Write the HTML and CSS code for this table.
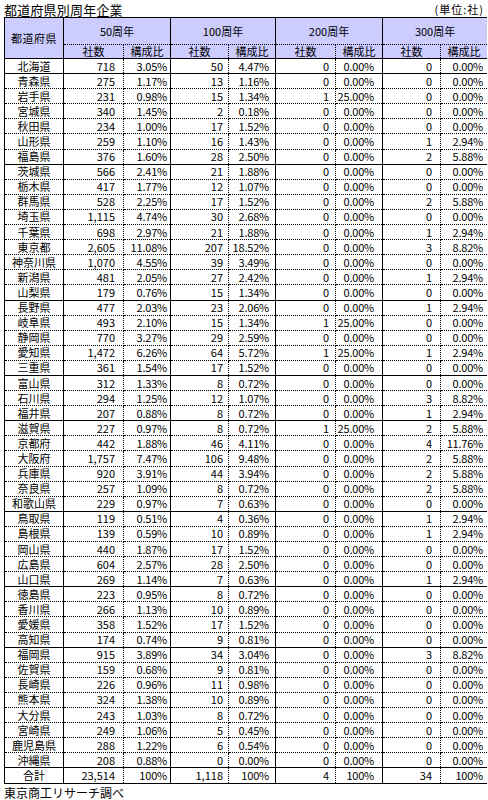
FILE: index.html
```html
<!DOCTYPE html>
<html lang="ja">
<head>
<meta charset="utf-8">
<title>都道府県別周年企業</title>
<link rel="stylesheet" href="styles.css">
</head>
<body>
<div class="head">
  <div class="title">都道府県別周年企業</div>
  <div class="unit">(単位:社)</div>
</div>
<table class="tbl">
  <colgroup>
    <col class="w-pref"><col class="w-n1"><col class="w-p"><col class="w-n2"><col class="w-p"><col class="w-n1"><col class="w-p"><col class="w-n2"><col class="w-p">
  </colgroup>
  <thead>
    <tr class="hr1">
      <th rowspan="2" class="pref">都道府県</th>
      <th colspan="2" class="grp">50周年</th>
      <th colspan="2" class="grp">100周年</th>
      <th colspan="2" class="grp">200周年</th>
      <th colspan="2" class="grp">300周年</th>
    </tr>
    <tr class="hr2">
      <th class="n">社数</th><th class="p">構成比</th>
      <th class="n">社数</th><th class="p">構成比</th>
      <th class="n">社数</th><th class="p">構成比</th>
      <th class="n">社数</th><th class="p">構成比</th>
    </tr>
  </thead>
  <tbody>
    <tr class="rs"><td class="pref">北海道</td><td class="n c1">718</td><td class="p p1">3.05%</td><td class="n c2">50</td><td class="p p2">4.47%</td><td class="n c3">0</td><td class="p p3">0.00%</td><td class="n c4">0</td><td class="p p4">0.00%</td></tr>
    <tr class="rs"><td class="pref">青森県</td><td class="n c1">275</td><td class="p p1">1.17%</td><td class="n c2">13</td><td class="p p2">1.16%</td><td class="n c3">0</td><td class="p p3">0.00%</td><td class="n c4">0</td><td class="p p4">0.00%</td></tr>
    <tr><td class="pref">岩手県</td><td class="n c1">231</td><td class="p p1">0.98%</td><td class="n c2">15</td><td class="p p2">1.34%</td><td class="n c3">1</td><td class="p p3">25.00%</td><td class="n c4">0</td><td class="p p4">0.00%</td></tr>
    <tr><td class="pref">宮城県</td><td class="n c1">340</td><td class="p p1">1.45%</td><td class="n c2">2</td><td class="p p2">0.18%</td><td class="n c3">0</td><td class="p p3">0.00%</td><td class="n c4">0</td><td class="p p4">0.00%</td></tr>
    <tr><td class="pref">秋田県</td><td class="n c1">234</td><td class="p p1">1.00%</td><td class="n c2">17</td><td class="p p2">1.52%</td><td class="n c3">0</td><td class="p p3">0.00%</td><td class="n c4">0</td><td class="p p4">0.00%</td></tr>
    <tr><td class="pref">山形県</td><td class="n c1">259</td><td class="p p1">1.10%</td><td class="n c2">16</td><td class="p p2">1.43%</td><td class="n c3">0</td><td class="p p3">0.00%</td><td class="n c4">1</td><td class="p p4">2.94%</td></tr>
    <tr><td class="pref">福島県</td><td class="n c1">376</td><td class="p p1">1.60%</td><td class="n c2">28</td><td class="p p2">2.50%</td><td class="n c3">0</td><td class="p p3">0.00%</td><td class="n c4">2</td><td class="p p4">5.88%</td></tr>
    <tr class="rs"><td class="pref">茨城県</td><td class="n c1">566</td><td class="p p1">2.41%</td><td class="n c2">21</td><td class="p p2">1.88%</td><td class="n c3">0</td><td class="p p3">0.00%</td><td class="n c4">0</td><td class="p p4">0.00%</td></tr>
    <tr><td class="pref">栃木県</td><td class="n c1">417</td><td class="p p1">1.77%</td><td class="n c2">12</td><td class="p p2">1.07%</td><td class="n c3">0</td><td class="p p3">0.00%</td><td class="n c4">0</td><td class="p p4">0.00%</td></tr>
    <tr><td class="pref">群馬県</td><td class="n c1">528</td><td class="p p1">2.25%</td><td class="n c2">17</td><td class="p p2">1.52%</td><td class="n c3">0</td><td class="p p3">0.00%</td><td class="n c4">2</td><td class="p p4">5.88%</td></tr>
    <tr><td class="pref">埼玉県</td><td class="n c1">1,115</td><td class="p p1">4.74%</td><td class="n c2">30</td><td class="p p2">2.68%</td><td class="n c3">0</td><td class="p p3">0.00%</td><td class="n c4">0</td><td class="p p4">0.00%</td></tr>
    <tr><td class="pref">千葉県</td><td class="n c1">698</td><td class="p p1">2.97%</td><td class="n c2">21</td><td class="p p2">1.88%</td><td class="n c3">0</td><td class="p p3">0.00%</td><td class="n c4">1</td><td class="p p4">2.94%</td></tr>
    <tr><td class="pref">東京都</td><td class="n c1">2,605</td><td class="p p1">11.08%</td><td class="n c2">207</td><td class="p p2">18.52%</td><td class="n c3">0</td><td class="p p3">0.00%</td><td class="n c4">3</td><td class="p p4">8.82%</td></tr>
    <tr><td class="pref">神奈川県</td><td class="n c1">1,070</td><td class="p p1">4.55%</td><td class="n c2">39</td><td class="p p2">3.49%</td><td class="n c3">0</td><td class="p p3">0.00%</td><td class="n c4">0</td><td class="p p4">0.00%</td></tr>
    <tr><td class="pref">新潟県</td><td class="n c1">481</td><td class="p p1">2.05%</td><td class="n c2">27</td><td class="p p2">2.42%</td><td class="n c3">0</td><td class="p p3">0.00%</td><td class="n c4">1</td><td class="p p4">2.94%</td></tr>
    <tr><td class="pref">山梨県</td><td class="n c1">179</td><td class="p p1">0.76%</td><td class="n c2">15</td><td class="p p2">1.34%</td><td class="n c3">0</td><td class="p p3">0.00%</td><td class="n c4">0</td><td class="p p4">0.00%</td></tr>
    <tr class="rs"><td class="pref">長野県</td><td class="n c1">477</td><td class="p p1">2.03%</td><td class="n c2">23</td><td class="p p2">2.06%</td><td class="n c3">0</td><td class="p p3">0.00%</td><td class="n c4">1</td><td class="p p4">2.94%</td></tr>
    <tr><td class="pref">岐阜県</td><td class="n c1">493</td><td class="p p1">2.10%</td><td class="n c2">15</td><td class="p p2">1.34%</td><td class="n c3">1</td><td class="p p3">25.00%</td><td class="n c4">0</td><td class="p p4">0.00%</td></tr>
    <tr><td class="pref">静岡県</td><td class="n c1">770</td><td class="p p1">3.27%</td><td class="n c2">29</td><td class="p p2">2.59%</td><td class="n c3">0</td><td class="p p3">0.00%</td><td class="n c4">0</td><td class="p p4">0.00%</td></tr>
    <tr><td class="pref">愛知県</td><td class="n c1">1,472</td><td class="p p1">6.26%</td><td class="n c2">64</td><td class="p p2">5.72%</td><td class="n c3">1</td><td class="p p3">25.00%</td><td class="n c4">1</td><td class="p p4">2.94%</td></tr>
    <tr><td class="pref">三重県</td><td class="n c1">361</td><td class="p p1">1.54%</td><td class="n c2">17</td><td class="p p2">1.52%</td><td class="n c3">0</td><td class="p p3">0.00%</td><td class="n c4">0</td><td class="p p4">0.00%</td></tr>
    <tr class="rs"><td class="pref">富山県</td><td class="n c1">312</td><td class="p p1">1.33%</td><td class="n c2">8</td><td class="p p2">0.72%</td><td class="n c3">0</td><td class="p p3">0.00%</td><td class="n c4">0</td><td class="p p4">0.00%</td></tr>
    <tr><td class="pref">石川県</td><td class="n c1">294</td><td class="p p1">1.25%</td><td class="n c2">12</td><td class="p p2">1.07%</td><td class="n c3">0</td><td class="p p3">0.00%</td><td class="n c4">3</td><td class="p p4">8.82%</td></tr>
    <tr><td class="pref">福井県</td><td class="n c1">207</td><td class="p p1">0.88%</td><td class="n c2">8</td><td class="p p2">0.72%</td><td class="n c3">0</td><td class="p p3">0.00%</td><td class="n c4">1</td><td class="p p4">2.94%</td></tr>
    <tr class="rs"><td class="pref">滋賀県</td><td class="n c1">227</td><td class="p p1">0.97%</td><td class="n c2">8</td><td class="p p2">0.72%</td><td class="n c3">1</td><td class="p p3">25.00%</td><td class="n c4">2</td><td class="p p4">5.88%</td></tr>
    <tr><td class="pref">京都府</td><td class="n c1">442</td><td class="p p1">1.88%</td><td class="n c2">46</td><td class="p p2">4.11%</td><td class="n c3">0</td><td class="p p3">0.00%</td><td class="n c4">4</td><td class="p p4">11.76%</td></tr>
    <tr><td class="pref">大阪府</td><td class="n c1">1,757</td><td class="p p1">7.47%</td><td class="n c2">106</td><td class="p p2">9.48%</td><td class="n c3">0</td><td class="p p3">0.00%</td><td class="n c4">2</td><td class="p p4">5.88%</td></tr>
    <tr><td class="pref">兵庫県</td><td class="n c1">920</td><td class="p p1">3.91%</td><td class="n c2">44</td><td class="p p2">3.94%</td><td class="n c3">0</td><td class="p p3">0.00%</td><td class="n c4">2</td><td class="p p4">5.88%</td></tr>
    <tr><td class="pref">奈良県</td><td class="n c1">257</td><td class="p p1">1.09%</td><td class="n c2">8</td><td class="p p2">0.72%</td><td class="n c3">0</td><td class="p p3">0.00%</td><td class="n c4">2</td><td class="p p4">5.88%</td></tr>
    <tr><td class="pref">和歌山県</td><td class="n c1">229</td><td class="p p1">0.97%</td><td class="n c2">7</td><td class="p p2">0.63%</td><td class="n c3">0</td><td class="p p3">0.00%</td><td class="n c4">0</td><td class="p p4">0.00%</td></tr>
    <tr class="rs"><td class="pref">鳥取県</td><td class="n c1">119</td><td class="p p1">0.51%</td><td class="n c2">4</td><td class="p p2">0.36%</td><td class="n c3">0</td><td class="p p3">0.00%</td><td class="n c4">1</td><td class="p p4">2.94%</td></tr>
    <tr><td class="pref">島根県</td><td class="n c1">139</td><td class="p p1">0.59%</td><td class="n c2">10</td><td class="p p2">0.89%</td><td class="n c3">0</td><td class="p p3">0.00%</td><td class="n c4">1</td><td class="p p4">2.94%</td></tr>
    <tr><td class="pref">岡山県</td><td class="n c1">440</td><td class="p p1">1.87%</td><td class="n c2">17</td><td class="p p2">1.52%</td><td class="n c3">0</td><td class="p p3">0.00%</td><td class="n c4">0</td><td class="p p4">0.00%</td></tr>
    <tr><td class="pref">広島県</td><td class="n c1">604</td><td class="p p1">2.57%</td><td class="n c2">28</td><td class="p p2">2.50%</td><td class="n c3">0</td><td class="p p3">0.00%</td><td class="n c4">0</td><td class="p p4">0.00%</td></tr>
    <tr><td class="pref">山口県</td><td class="n c1">269</td><td class="p p1">1.14%</td><td class="n c2">7</td><td class="p p2">0.63%</td><td class="n c3">0</td><td class="p p3">0.00%</td><td class="n c4">1</td><td class="p p4">2.94%</td></tr>
    <tr class="rs"><td class="pref">徳島県</td><td class="n c1">223</td><td class="p p1">0.95%</td><td class="n c2">8</td><td class="p p2">0.72%</td><td class="n c3">0</td><td class="p p3">0.00%</td><td class="n c4">0</td><td class="p p4">0.00%</td></tr>
    <tr><td class="pref">香川県</td><td class="n c1">266</td><td class="p p1">1.13%</td><td class="n c2">10</td><td class="p p2">0.89%</td><td class="n c3">0</td><td class="p p3">0.00%</td><td class="n c4">0</td><td class="p p4">0.00%</td></tr>
    <tr><td class="pref">愛媛県</td><td class="n c1">358</td><td class="p p1">1.52%</td><td class="n c2">17</td><td class="p p2">1.52%</td><td class="n c3">0</td><td class="p p3">0.00%</td><td class="n c4">0</td><td class="p p4">0.00%</td></tr>
    <tr><td class="pref">高知県</td><td class="n c1">174</td><td class="p p1">0.74%</td><td class="n c2">9</td><td class="p p2">0.81%</td><td class="n c3">0</td><td class="p p3">0.00%</td><td class="n c4">0</td><td class="p p4">0.00%</td></tr>
    <tr class="rs"><td class="pref">福岡県</td><td class="n c1">915</td><td class="p p1">3.89%</td><td class="n c2">34</td><td class="p p2">3.04%</td><td class="n c3">0</td><td class="p p3">0.00%</td><td class="n c4">3</td><td class="p p4">8.82%</td></tr>
    <tr><td class="pref">佐賀県</td><td class="n c1">159</td><td class="p p1">0.68%</td><td class="n c2">9</td><td class="p p2">0.81%</td><td class="n c3">0</td><td class="p p3">0.00%</td><td class="n c4">0</td><td class="p p4">0.00%</td></tr>
    <tr><td class="pref">長崎県</td><td class="n c1">226</td><td class="p p1">0.96%</td><td class="n c2">11</td><td class="p p2">0.98%</td><td class="n c3">0</td><td class="p p3">0.00%</td><td class="n c4">0</td><td class="p p4">0.00%</td></tr>
    <tr><td class="pref">熊本県</td><td class="n c1">324</td><td class="p p1">1.38%</td><td class="n c2">10</td><td class="p p2">0.89%</td><td class="n c3">0</td><td class="p p3">0.00%</td><td class="n c4">0</td><td class="p p4">0.00%</td></tr>
    <tr><td class="pref">大分県</td><td class="n c1">243</td><td class="p p1">1.03%</td><td class="n c2">8</td><td class="p p2">0.72%</td><td class="n c3">0</td><td class="p p3">0.00%</td><td class="n c4">0</td><td class="p p4">0.00%</td></tr>
    <tr><td class="pref">宮崎県</td><td class="n c1">249</td><td class="p p1">1.06%</td><td class="n c2">5</td><td class="p p2">0.45%</td><td class="n c3">0</td><td class="p p3">0.00%</td><td class="n c4">0</td><td class="p p4">0.00%</td></tr>
    <tr><td class="pref">鹿児島県</td><td class="n c1">288</td><td class="p p1">1.22%</td><td class="n c2">6</td><td class="p p2">0.54%</td><td class="n c3">0</td><td class="p p3">0.00%</td><td class="n c4">0</td><td class="p p4">0.00%</td></tr>
    <tr><td class="pref">沖縄県</td><td class="n c1">208</td><td class="p p1">0.88%</td><td class="n c2">0</td><td class="p p2">0.00%</td><td class="n c3">0</td><td class="p p3">0.00%</td><td class="n c4">0</td><td class="p p4">0.00%</td></tr>
    <tr class="rs total"><td class="pref">合計</td><td class="n c1">23,514</td><td class="p p1">100%</td><td class="n c2">1,118</td><td class="p p2">100%</td><td class="n c3">4</td><td class="p p3">100%</td><td class="n c4">34</td><td class="p p4">100%</td></tr>
  </tbody>
</table>
<div class="source">東京商工リサーチ調べ</div>
</body>
</html>
```
FILE: styles.css
```css
html, body {
  margin: 0;
  background: #ffffff;
}
body {
  padding: 0 0 0 4px;
  width: 483px;
  font-family: "Noto Sans CJK JP", "Liberation Sans", sans-serif;
  color: #000000;
}
.head {
  display: flex;
  justify-content: space-between;
  align-items: flex-end;
  height: 17px;
}
.title {
  align-self: flex-start;
  font-size: 13px;
  line-height: 19px;
  height: 17px;
  letter-spacing: 0.2px;
}
.unit {
  font-size: 11px;
  line-height: 16px;
  margin-right: 3px;
  letter-spacing: 1px;
}
.tbl {
  border-collapse: collapse;
  table-layout: fixed;
  width: 483px;
  border: 1px solid #000;
  font-size: 11px;
}
.w-pref { width: 59px; }
.w-n1 { width: 60px; }
.w-n2 { width: 58px; }
.w-p { width: 47px; }
.tbl th, .tbl td {
  padding: 0;
  line-height: 13px;
  white-space: nowrap;
  border-bottom: 1px dotted #000;
}
.tbl th {
  background: #ccccff;
  font-weight: normal;
}
.hr1 { height: 27px; }
.hr2 { height: 14px; }
.hr2 th { border-bottom: 1px solid #000; }
.tbl th.pref { border-right: 1px solid #000; border-bottom: 1px solid #000; letter-spacing: 0.5px; }
.tbl th.grp { border-right: 1px solid #000; }
.tbl th.n { border-right: 1px dotted #000; }
.tbl th.p { border-right: 1px solid #000; }
.tbl tbody tr { height: 15.1px; }
.tbl td.pref {
  text-align: center;
  border-right: 1px solid #000;
}
.tbl td.n {
  text-align: right;
  border-right: 1px dotted #000;
}
.tbl td.p {
  text-align: right;
  border-right: 1px solid #000;
  letter-spacing: -0.2px;
}
.tbl tr.rs td { border-top: 1px solid #000; }
.c1 { padding-right: 8px !important; }
.p1 { padding-right: 3px !important; }
.c2 { padding-right: 5px !important; }
.p2 { padding-right: 6px !important; }
.c3 { padding-right: 6px !important; }
.p3 { padding-right: 8px !important; }
.c4 { padding-right: 8px !important; }
.p4 { padding-right: 4px !important; }
.source {
  font-size: 12px;
  line-height: 15px;
  margin-top: 1px;
}
```
